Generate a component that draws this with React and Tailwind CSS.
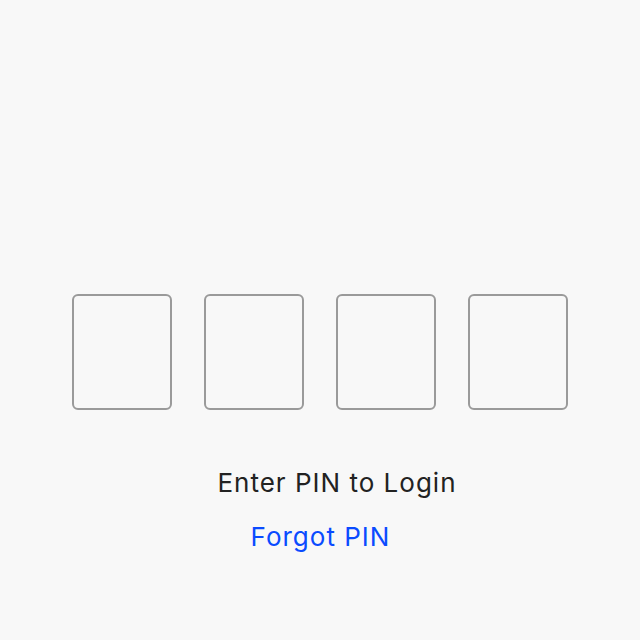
import React from 'react';

export default function App() {
  return (
    <div className="w-[640px] h-[640px] bg-[#f8f8f8] flex flex-col items-center" style={{ fontFamily: 'Inter, "Noto Sans", sans-serif' }}>
      <div className="flex gap-8 mt-[294px]">
        {[0, 1, 2, 3].map((i) => (
          <div key={i} className="w-[100px] h-[116px] border-2 border-[#9a9a9a] rounded-[6px]" />
        ))}
      </div>
      <div className="mt-[58px] pl-[34px] text-[26px] leading-[30px] tracking-[1px] text-[#222222]">Enter PIN to Login</div>
      <button className="mt-[24px] pl-[1px] text-[26px] leading-[30px] tracking-[1px] text-[#0a4bff]">Forgot PIN</button>
    </div>
  );
}
